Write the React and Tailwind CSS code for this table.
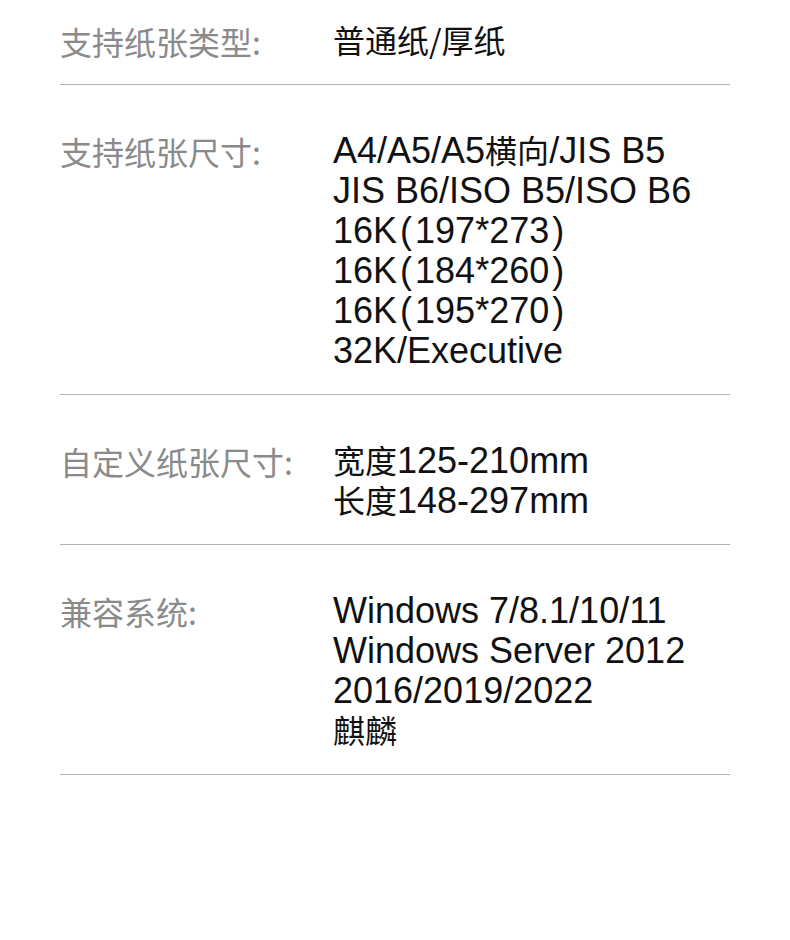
import React from "react";

const latin = { fontFamily: '"Liberation Sans", Arial, "Noto Sans CJK SC", sans-serif' };

function C({ children }) {
  return (
    <span className="text-[32px] leading-none" style={{ fontFamily: '"Noto Sans CJK SC", sans-serif' }}>
      {children}
    </span>
  );
}

function P({ children }) {
  return <span className="mx-[3px]">{children}</span>;
}

function Row({ label, lines, pt = "pt-[46px]", pb = "pb-[23px]" }) {
  return (
    <div className={`flex ${pt} ${pb}`}>
      <div
        className="w-[273px] shrink-0 text-[32px] leading-[40px] text-[#8a8a8a]"
        style={{ fontFamily: '"Noto Sans CJK SC", sans-serif' }}
      >
        {label}
      </div>
      <div className="flex flex-col text-[36px] leading-[40px] text-[#111]" style={latin}>
        {lines.map((l, i) => (
          <div key={i} className="h-[40px] whitespace-nowrap">
            {l}
          </div>
        ))}
      </div>
    </div>
  );
}

function Divider() {
  return <div className="h-px bg-[#b4b4b4]" />;
}

export default function App() {
  return (
    <div className="w-[790px] h-[940px] bg-white px-[60px]">
      <Row
        pt="pt-[21px]"
        pb="pb-[23px]"
        label="支持纸张类型:"
        lines={[<C>普通纸/厚纸</C>]}
      />
      <Divider />
      <Row
        label="支持纸张尺寸:"
        lines={[
          <>A4/A5/A5<C>横向</C>/JIS B5</>,
          <>JIS B6/ISO B5/ISO B6</>,
          <>16K<P>(</P>197*273<P>)</P></>,
          <>16K<P>(</P>184*260<P>)</P></>,
          <>16K<P>(</P>195*270<P>)</P></>,
          <>32K/Executive</>,
        ]}
      />
      <Divider />
      <Row
        label="自定义纸张尺寸:"
        lines={[
          <><C>宽度</C>125-210mm</>,
          <><C>长度</C>148-297mm</>,
        ]}
      />
      <Divider />
      <Row
        label="兼容系统:"
        lines={[
          <>Windows 7/8.1/10/11</>,
          <>Windows Server 2012</>,
          <>2016/2019/2022</>,
          <C>麒麟</C>,
        ]}
      />
      <Divider />
    </div>
  );
}
